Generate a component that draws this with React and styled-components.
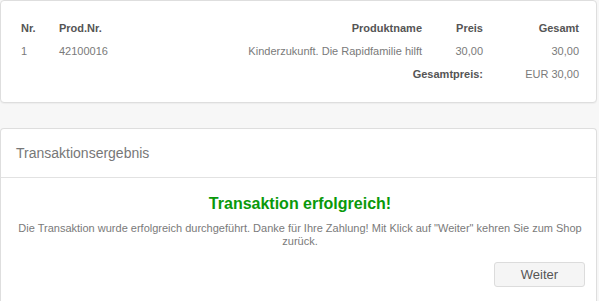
import React from 'react';
import styled, { createGlobalStyle } from 'styled-components';

const GlobalStyle = createGlobalStyle`
  html, body {
    margin: 0;
    padding: 0;
    background: #f7f7f7;
  }
  body {
    font-family: "Liberation Sans", Arial, sans-serif;
    color: #666;
  }
`;

const Page = styled.div`
  display: flex;
  flex-direction: column;
  gap: 25px;
  padding: 0 2px 0 0;
`;

const Card = styled.div`
  background: #fff;
  border: 1px solid #dedede;
  border-radius: 4px;
  box-shadow: 0 1px 1px rgba(0, 0, 0, 0.04);
  overflow: hidden;
`;

const OrderCard = styled(Card)`
  padding: 16px 12px 16px 15px;
`;

const Table = styled.table`
  width: 100%;
  border-collapse: collapse;
  font-size: 11px;
`;

const Th = styled.th`
  text-align: ${(p) => p.align || 'left'};
  font-weight: bold;
  color: #555;
  line-height: 13px;
  padding: 5px;
  width: ${(p) => p.w || 'auto'};
`;

const Td = styled.td`
  text-align: ${(p) => p.align || 'left'};
  color: ${(p) => (p.bold ? '#555' : '#7a7a7a')};
  font-weight: ${(p) => (p.bold ? 'bold' : 'normal')};
  line-height: 13px;
  padding: 5px;
`;

const ResultCard = styled(Card)`
  border-bottom: none;
  border-radius: 4px 4px 0 0;
`;

const CardHeader = styled.div`
  height: 48px;
  display: flex;
  align-items: center;
  padding: 0 15px;
  font-size: 14px;
  color: #777;
  border-bottom: 1px solid #e2e2e2;
`;

const CardBody = styled.div`
  padding: 16px 11px 18px 14px;
  display: flex;
  flex-direction: column;
  align-items: center;
`;

const SuccessTitle = styled.h3`
  margin: 0 0 8px;
  font-size: 16px;
  line-height: 20px;
  color: #0a990a;
  font-weight: bold;
`;

const Message = styled.p`
  margin: 0;
  font-size: 11px;
  line-height: 13px;
  text-align: center;
  color: #7a7a7a;
  max-width: 572px;
`;

const Actions = styled.div`
  align-self: stretch;
  display: flex;
  justify-content: flex-end;
  margin-top: 14px;
`;

const Button = styled.button`
  width: 91px;
  height: 25px;
  background: #f5f5f5;
  border: 1px solid #dcdcdc;
  border-radius: 3px;
  font-family: "Liberation Sans", Arial, sans-serif;
  font-size: 13px;
  color: #555;
  cursor: pointer;
`;

export default function App() {
  return (
    <>
      <GlobalStyle />
      <Page>
        <OrderCard>
          <Table>
            <thead>
              <tr>
                <Th w="28px">Nr.</Th>
                <Th w="90px">Prod.Nr.</Th>
                <Th align="right">Produktname</Th>
                <Th align="right" w="51px">Preis</Th>
                <Th align="right" w="86px">Gesamt</Th>
              </tr>
            </thead>
            <tbody>
              <tr>
                <Td>1</Td>
                <Td>42100016</Td>
                <Td align="right">Kinderzukunft. Die Rapidfamilie hilft</Td>
                <Td align="right">30,00</Td>
                <Td align="right">30,00</Td>
              </tr>
              <tr>
                <Td colSpan={4} align="right" bold>Gesamtpreis:</Td>
                <Td align="right">EUR 30,00</Td>
              </tr>
            </tbody>
          </Table>
        </OrderCard>
        <ResultCard>
          <CardHeader>Transaktionsergebnis</CardHeader>
          <CardBody>
            <SuccessTitle>Transaktion erfolgreich!</SuccessTitle>
            <Message>
              Die Transaktion wurde erfolgreich durchgeführt. Danke für Ihre Zahlung! Mit Klick auf "Weiter" kehren Sie zum Shop zurück.
            </Message>
            <Actions>
              <Button>Weiter</Button>
            </Actions>
          </CardBody>
        </ResultCard>
      </Page>
    </>
  );
}
